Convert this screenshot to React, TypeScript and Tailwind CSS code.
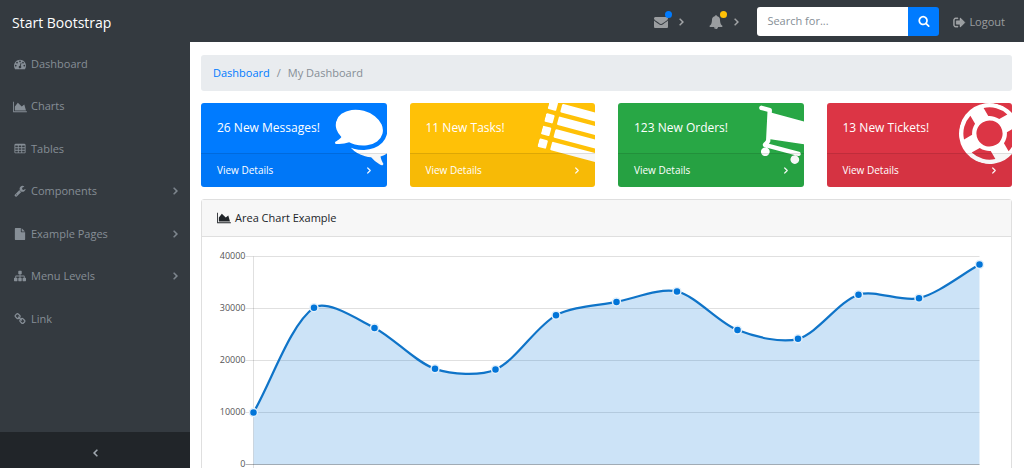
import React from "react";

type Glyph = { path: string; box?: string; stroke?: number };

const cell = (x: number, y: number) =>
  `M${x + 384} ${y + 224}v-192q0-14-9-23t-23-9h-320q-14 0-23 9t-9 23v192q0 14 9 23t23 9h320q14 0 23-9t9-23z`;

const bar = (x: number, y: number, w: number) =>
  `M${x + w} ${y + 32}v192q0 13-9.5 22.5t-22.5 9.5h-${w - 64}q-13 0-22.5-9.5t-9.5-22.5v-192q0-13 9.5-22.5t22.5-9.5h${w - 64}q13 0 22.5 9.5t9.5 22.5z`;

const glyphs = {
  dashboard: {
    path: "M384 1152q0-53-37.5-90.5t-90.5-37.5-90.5 37.5-37.5 90.5 37.5 90.5 90.5 37.5 90.5-37.5 37.5-90.5zm192-448q0-53-37.5-90.5t-90.5-37.5-90.5 37.5-37.5 90.5 37.5 90.5 90.5 37.5 90.5-37.5 37.5-90.5zm428 481l101-382q6-26-7.5-48.5t-38.5-29.5-48 6.5-30 39.5l-101 382q-60 5-107 43.5t-63 98.5q-20 77 20 146t117 89 146-20 89-117q16-60-6-117t-72-91zm660-33q0-53-37.5-90.5t-90.5-37.5-90.5 37.5-37.5 90.5 37.5 90.5 90.5 37.5 90.5-37.5 37.5-90.5zm-640-640q0-53-37.5-90.5t-90.5-37.5-90.5 37.5-37.5 90.5 37.5 90.5 90.5 37.5 90.5-37.5 37.5-90.5zm448 192q0-53-37.5-90.5t-90.5-37.5-90.5 37.5-37.5 90.5 37.5 90.5 90.5 37.5 90.5-37.5 37.5-90.5zm320 448q0 261-141 483-19 29-54 29h-1402q-35 0-54-29-141-221-141-483 0-182 71-348t191-286 286-191 348-71 348 71 286 191 191 286 71 348z",
  },
  area: {
    path: "M2048 1536v128h-2048v-1536h128v1408h1920zm-384-1024l256 896h-1664v-576l448-576 576 576z",
    box: "0 0 2048 1792",
  },
  table: {
    path:
      [192, 704, 1216].flatMap((x) => [384, 768, 1152].map((y) => cell(x, y))).join("") +
      "M1728 288v1088q0 66-47 113t-113 47h-1344q-66 0-113-47t-47-113v-1088q0-66 47-113t113-47h1344q66 0 113 47t47 113z",
  },
  wrench: {
    path: "M448 1472q0-26-19-45t-45-19-45 19-19 45 19 45 45 19 45-19 19-45zm644-420l-682 682q-37 37-90 37-52 0-91-37l-106-108q-38-36-38-90 0-53 38-91l681-681q39 98 114.5 173.5t173.5 114.5zm634-435q0 39-23 106-47 134-164.5 217.5t-258.5 83.5q-185 0-316.5-131.5t-131.5-316.5 131.5-316.5 316.5-131.5q58 0 121.5 16.5t107.5 46.5q16 11 16 28t-16 28l-293 169v224l193 107q5-3 79-48.5t135.5-81 70.5-35.5q15 0 23.5 10t8.5 25z",
  },
  file: {
    path: "M1152 512v-472q22 14 36 28l408 408q14 14 28 36h-472zm-128 32q0 40 28 68t68 28h544v1056q0 40-28 68t-68 28h-1344q-40 0-68-28t-28-68v-1600q0-40 28-68t68-28h800v544z",
  },
  sitemap: {
    path: "M1792 1248v320q0 40-28 68t-68 28h-320q-40 0-68-28t-28-68v-320q0-40 28-68t68-28h96v-192h-512v192h96q40 0 68 28t28 68v320q0 40-28 68t-68 28h-320q-40 0-68-28t-28-68v-320q0-40 28-68t68-28h96v-192h-512v192h96q40 0 68 28t28 68v320q0 40-28 68t-68 28h-320q-40 0-68-28t-28-68v-320q0-40 28-68t68-28h96v-192q0-52 38-90t90-38h512v-192h-96q-40 0-68-28t-28-68v-320q0-40 28-68t68-28h320q40 0 68 28t28 68v320q0 40-28 68t-68 28h-96v192h512q52 0 90 38t38 90v192h96q40 0 68 28t28 68z",
  },
  link: {
    path: "M1520 1216q0-40-28-68l-208-208q-28-28-68-28-42 0-72 32 3 3 19 18.5t21.5 21.5 15 19 13 25.5 3.5 27.5q0 40-28 68t-68 28q-15 0-27.5-3.5t-25.5-13-19-15-21.5-21.5-18.5-19q-33 31-33 73 0 40 28 68l206 207q27 27 68 27 40 0 68-26l147-146q28-28 28-67zm-703-705q0-40-28-68l-206-207q-28-28-68-28-39 0-68 27l-147 146q-28 28-28 67 0 40 28 68l208 208q27 27 68 27 42 0 72-31-3-3-19-18.5t-21.5-21.5-15-19-13-25.5-3.5-27.5q0-40 28-68t68-28q15 0 27.5 3.5t25.5 13 19 15 21.5 21.5 18.5 19q33-31 33-73zm895 705q0 120-85 203l-147 146q-83 83-203 83-121 0-204-85l-206-207q-83-83-83-203 0-123 88-209l-88-88q-86 88-208 88-120 0-204-84l-208-208q-84-84-84-204t85-203l147-146q83-83 203-83 121 0 204 85l206 207q83 83 83 203 0 123-88 209l88 88q86-88 208-88 120 0 204 84l208 208q84 84 84 204z",
  },
  envelope: {
    path: "M1792 710v794q0 66-47 113t-113 47h-1472q-66 0-113-47t-47-113v-794q44 49 101 87 362 246 497 345 57 42 92.5 65.5t94.5 48 110 24.5h2q51 0 110-24.5t94.5-48 92.5-65.5q170-123 498-345 57-39 100-87zm0-294q0 79-49 151t-122 123q-376 261-468 325-10 7-42.5 31t-54 38.5-52 32.5-57.5 27-50 9h-2q-23 0-50-9t-57.5-27-52-32.5-54-38.5-42.5-31q-91-64-262-182.5t-205-142.5q-62-42-117-115.5t-55-136.5q0-78 41.5-130t118.5-52h1472q65 0 112.5 47t47.5 113z",
  },
  bell: {
    path: "M912 1696q0-16-16-16-59 0-101.5-42.5t-42.5-101.5q0-16-16-16t-16 16q0 73 51.5 124.5t124.5 51.5q16 0 16-16zm816-288q0 52-38 90t-90 38h-448q0 106-75 181t-181 75-181-75-75-181h-448q-52 0-90-38t-38-90q50-42 91-88t85-119.5 74.5-158.5 50-206 19.5-260q0-152 117-282.5t307-158.5q-8-19-8-39 0-40 28-68t68-28 68 28 28 68q0 20-8 39 190 28 307 158.5t117 282.5q0 139 19.5 260t50 206 74.5 158.5 85 119.5 91 88z",
  },
  right: {
    path: "M1171 960q0 13-10 23l-466 466q-10 10-23 10t-23-10l-50-50q-10-10-10-23t10-23l393-393-393-393q-10-10-10-23t10-23l50-50q10-10 23-10t23 10l466 466q10 10 10 23z",
    box: "540 374 680 1172",
    stroke: 90,
  },
  search: {
    path: "M1216 832q0-185-131.5-316.5t-316.5-131.5-316.5 131.5-131.5 316.5 131.5 316.5 316.5 131.5 316.5-131.5 131.5-316.5zm512 832q0 52-38 90t-90 38q-54 0-90-38l-343-342q-179 124-399 124-143 0-273.5-55.5t-225-150-150-225-55.5-273.5 55.5-273.5 150-225 225-150 273.5-55.5 273.5 55.5 225 150 150 225 55.5 273.5q0 220-124 399l343 343q37 37 37 90z",
  },
  logout: {
    path: "M704 1440q0 4 1 20t.5 26.5-3 23.5-10 19.5-20.5 6.5h-320q-119 0-203.5-84.5t-84.5-203.5v-704q0-119 84.5-203.5t203.5-84.5h320q13 0 22.5 9.5t9.5 22.5q0 4 1 20t.5 26.5-3 23.5-10 19.5-20.5 6.5h-320q-66 0-113 47t-47 113v704q0 66 47 113t113 47h312l11.5 1 11.5 3 8 5.5 7 9 2 13.5zm928-544q0 26-19 45l-544 544q-19 19-45 19t-45-19-19-45v-288h-448q-26 0-45-19t-19-45v-384q0-26 19-45t45-19h448v-288q0-26 19-45t45-19 45 19l544 544q19 19 19 45z",
    stroke: 60,
  },
  comments: {
    path: "M1408 768q0 139-94 257t-256.5 186.5-353.5 68.5q-86 0-176-16-124 88-278 128-36 9-86 16h-3q-11 0-20.5-8t-11.5-21q-1-3-1-6.5t.5-6.5 2-6l2.5-5 3.5-5.5 4-5 4.5-5 4-4.5q5-6 23-25t26-29.5 22.5-29 25-38.5 20.5-44q-124-72-195-177t-71-224q0-139 94-257t256.5-186.5 353.5-68.5 353.5 68.5 256.5 186.5 94 257zm384 256q0 120-71 224.5t-195 176.5q10 24 20.5 44t25 38.5 22.5 29 26 29.5 23 25q1 1 4 4.5t4.5 5 4 5 3.5 5.5l2.5 5 2 6 .5 6.5-1 6.5q-3 14-13 22t-22 7q-50-7-86-16-154-40-278-128-90 16-176 16-271 0-472-132 58 4 88 4 161 0 309-45t264-129q125-92 192-212t67-254q0-77-23-152 129 71 204 178t75 230z",
  },
  list: {
    path: [128, 512, 896, 1280].map((y) => bar(0, y, 256) + bar(384, y, 1408)).join(""),
  },
  cart: {
    path: "M704 1536q0 52-38 90t-90 38-90-38-38-90 38-90 90-38 90 38 38 90zm896 0q0 52-38 90t-90 38-90-38-38-90 38-90 90-38 90 38 38 90zm128-1088v512q0 24-16.5 42.5t-40.5 21.5l-1044 122q13 60 13 70 0 16-24 64h920q26 0 45 19t19 45-19 45-45 19h-1024q-26 0-45-19t-19-45q0-11 8-31.5t16-36 21.5-40 15.5-29.5l-177-823h-204q-26 0-45-19t-19-45 19-45 45-19h256q16 0 28.5 6.5t19.5 15.5 13 24.5 8 26 5.5 29.5 4.5 26h1201q26 0 45 19t19 45z",
  },
  ring: {
    path: "M896 0q182 0 348 71t286 191 191 286 71 348-71 348-191 286-286 191-348 71-348-71-286-191-191-286-71-348 71-348 191-286 286-191 348-71zm0 128q-190 0-361 90l194 194q82-28 167-28t167 28l194-194q-171-90-361-90zm-678 1129l194-194q-28-82-28-167t28-167l-194-194q-90 171-90 361t90 361zm678 407q190 0 361-90l-194-194q-82 28-167 28t-167-28l-194 194q171 90 361 90zm0-384q159 0 271.5-112.5t112.5-271.5-112.5-271.5-271.5-112.5-271.5 112.5-112.5 271.5 112.5 271.5 271.5 112.5zm484-217l194 194q90-171 90-361t-90-361l-194 194q28 82 28 167t-28 167z",
  },
} satisfies Record<string, Glyph>;

type IconName = keyof typeof glyphs;

function Icon({ name, className = "" }: { name: IconName; className?: string }) {
  const glyph: Glyph = glyphs[name];
  return (
    <svg
      viewBox={glyph.box ?? "0 0 1792 1792"}
      fill="currentColor"
      fillRule="evenodd"
      stroke={glyph.stroke ? "currentColor" : "none"}
      strokeWidth={glyph.stroke}
      aria-hidden="true"
      className={`shrink-0 ${className}`}
    >
      <path d={glyph.path} />
    </svg>
  );
}

const menu: { label: string; icon: IconName; nested?: boolean }[] = [
  { label: "Dashboard", icon: "dashboard" },
  { label: "Charts", icon: "area" },
  { label: "Tables", icon: "table" },
  { label: "Components", icon: "wrench", nested: true },
  { label: "Example Pages", icon: "file", nested: true },
  { label: "Menu Levels", icon: "sitemap", nested: true },
  { label: "Link", icon: "link" },
];

const cards: { title: string; icon: IconName; color: string }[] = [
  { title: "26 New Messages!", icon: "comments", color: "bg-[#007bff]" },
  { title: "11 New Tasks!", icon: "list", color: "bg-[#ffc107]" },
  { title: "123 New Orders!", icon: "cart", color: "bg-[#28a745]" },
  { title: "13 New Tickets!", icon: "ring", color: "bg-[#dc3545]" },
];

function Navbar() {
  return (
    <header className="flex h-[42px] shrink-0 items-center bg-[#343a40] pr-[19px] pl-3 text-white/50">
      <a href="#" className="mr-auto pt-0.5 text-[14px] font-medium text-white">
        Start Bootstrap
      </a>
      <button type="button" aria-label="Messages" className="relative mr-[25px] flex items-center gap-[11px] pt-0.5">
        <Icon name="envelope" className="size-[14px]" />
        <Icon name="right" className="h-2 w-[5px]" />
        <span className="absolute -top-0.5 left-[11px] size-[7px] rounded-full bg-[#007bff]" />
      </button>
      <button type="button" aria-label="Alerts" className="relative mr-[18px] flex items-center gap-[11px] pt-0.5">
        <Icon name="bell" className="size-[14px]" />
        <Icon name="right" className="h-2 w-[5px]" />
        <span className="absolute -top-0.5 left-[11px] size-[7px] rounded-full bg-[#ffc107]" />
      </button>
      <form className="flex h-[29px]" onSubmit={(e) => e.preventDefault()}>
        <input
          type="text"
          aria-label="Search"
          placeholder="Search for..."
          className="w-[151px] rounded-l-[3px] bg-white px-2.5 text-[#495057] outline-none placeholder:text-[#868e96]"
        />
        <button
          type="submit"
          aria-label="Submit search"
          className="flex w-[31px] items-center justify-center rounded-r-[3px] bg-[#007bff] text-white"
        >
          <Icon name="search" className="size-3" />
        </button>
      </form>
      <a href="#" className="ml-[14px] flex items-center gap-[3px] pt-0.5">
        <Icon name="logout" className="size-[13px]" />
        Logout
      </a>
    </header>
  );
}

function Sidebar() {
  return (
    <nav className="flex w-[190px] shrink-0 flex-col justify-between bg-[#343a40] pt-px text-[#868e96]">
      <ul className="grid min-h-[297px] auto-rows-fr">
        {menu.map((item) => (
          <li key={item.label} className="grid">
            <a href="#" className="flex items-center gap-1 pr-3 pl-[13px]">
              <Icon name={item.icon} className="h-3 w-[14px]" />
              {item.label}
              {item.nested && <Icon name="right" className="ml-auto h-2 w-[5px]" />}
            </a>
          </li>
        ))}
      </ul>
      <button
        type="button"
        aria-label="Collapse menu"
        className="flex h-9 items-center justify-center bg-[#212529] pt-1.5 text-[#adb5bd]"
      >
        <Icon name="right" className="h-2 w-[5px] rotate-180" />
      </button>
    </nav>
  );
}

function StatCard({ title, icon, color }: { title: string; icon: IconName; color: string }) {
  return (
    <article className={`relative overflow-hidden rounded-[3px] text-white ${color}`}>
      <Icon name={icon} className="absolute top-0 -right-2 size-[61px] rotate-15" />
      <div className="relative px-4 py-4 text-[12px] leading-[18px]">{title}</div>
      <a
        href="#"
        className="relative flex items-center justify-between border-t border-black/10 bg-black/3 px-4 py-2 text-[10px] leading-[17px]"
      >
        View Details
        <Icon name="right" className="h-[7px] w-1" />
      </a>
    </article>
  );
}

const values = [10000, 30162, 26263, 18394, 18287, 28682, 31274, 33259, 25849, 24159, 32651, 31984, 38451];
const plot = { left: 36.5, right: 762.5, top: 4.5, bottom: 212.5 };
const ticks = [40000, 30000, 20000, 10000, 0];

const yOf = (v: number) => plot.bottom - (v / 40000) * (plot.bottom - plot.top);

const points = values.map((v, i) => ({
  x: plot.left + (i * (plot.right - plot.left)) / (values.length - 1),
  y: yOf(v),
}));

// Cubic spline whose handles are weighted by the distance to each neighbour.
const handles = points.map((p, i) => {
  const a = points[i - 1] ?? p;
  const b = points[i + 1] ?? p;
  const da = Math.hypot(p.x - a.x, p.y - a.y);
  const db = Math.hypot(b.x - p.x, b.y - p.y);
  const fa = (0.3 * da) / (da + db);
  const fb = (0.3 * db) / (da + db);
  return {
    inX: p.x - fa * (b.x - a.x),
    inY: p.y - fa * (b.y - a.y),
    outX: p.x + fb * (b.x - a.x),
    outY: p.y + fb * (b.y - a.y),
  };
});

const curve = points
  .map((p, i) => {
    if (i === 0) return `M${p.x} ${p.y}`;
    const from = handles[i - 1];
    const to = handles[i];
    return `C${from.outX} ${from.outY} ${to.inX} ${to.inY} ${p.x} ${p.y}`;
  })
  .join("");

function AreaChart() {
  return (
    <svg viewBox="0 -5 779 245" role="img" aria-label="Area Chart Example" className="block h-auto w-full">
      {ticks.map((t) => (
        <g key={t}>
          <line
            x1={plot.left - 8}
            x2={plot.right}
            y1={yOf(t)}
            y2={yOf(t)}
            stroke="#000"
            strokeOpacity={t === 0 ? 0.3 : 0.12}
          />
          <text x={plot.left - 8} y={yOf(t) + 2} textAnchor="end" fill="#555" className="text-[9px]">
            {t}
          </text>
        </g>
      ))}
      <line x1={plot.left} x2={plot.left} y1={plot.top} y2={plot.bottom + 8} stroke="#000" strokeOpacity={0.12} />
      <path d={`${curve}L${plot.right} ${plot.bottom}L${plot.left} ${plot.bottom}Z`} fill="#0275d8" fillOpacity={0.2} />
      <path d={curve} fill="none" stroke="#0f74c8" strokeWidth={2.2} />
      {points.map((p) => (
        <circle key={p.x} cx={p.x} cy={p.y} r={4} fill="#0275d8" stroke="#e3f0fb" strokeWidth={1.5} />
      ))}
    </svg>
  );
}

export default function App() {
  return (
    <div className="flex h-screen flex-col overflow-hidden bg-white font-['Open_Sans','Noto_Sans',sans-serif] text-[11px] text-[#212529]">
      <Navbar />
      <div className="flex min-h-0 flex-1">
        <Sidebar />
        <main className="flex min-w-0 flex-1 flex-col gap-3 overflow-hidden pt-[13px] pr-3 pl-[11px]">
          <nav aria-label="Breadcrumb" className="shrink-0 rounded-[3px] bg-[#e9ecef] px-3 py-[9px] leading-[18px]">
            <ol className="flex gap-[7px] text-[#868e96]">
              <li>
                <a href="#" className="text-[#007bff]">
                  Dashboard
                </a>
              </li>
              <li aria-hidden="true">/</li>
              <li>My Dashboard</li>
            </ol>
          </nav>
          <section className="grid shrink-0 grid-cols-4 gap-[23px]">
            {cards.map((card) => (
              <StatCard key={card.title} {...card} />
            ))}
          </section>
          <section className="shrink-0 rounded-[3px] border border-[#dfdfdf]">
            <h2 className="flex items-center gap-1 border-b border-[#dfdfdf] bg-[#f7f7f7] px-[15px] py-[9px] leading-[18px]">
              <Icon name="area" className="h-3 w-[14px]" />
              Area Chart Example
            </h2>
            <div className="px-[15px] py-2.5">
              <AreaChart />
            </div>
          </section>
        </main>
      </div>
    </div>
  );
}
